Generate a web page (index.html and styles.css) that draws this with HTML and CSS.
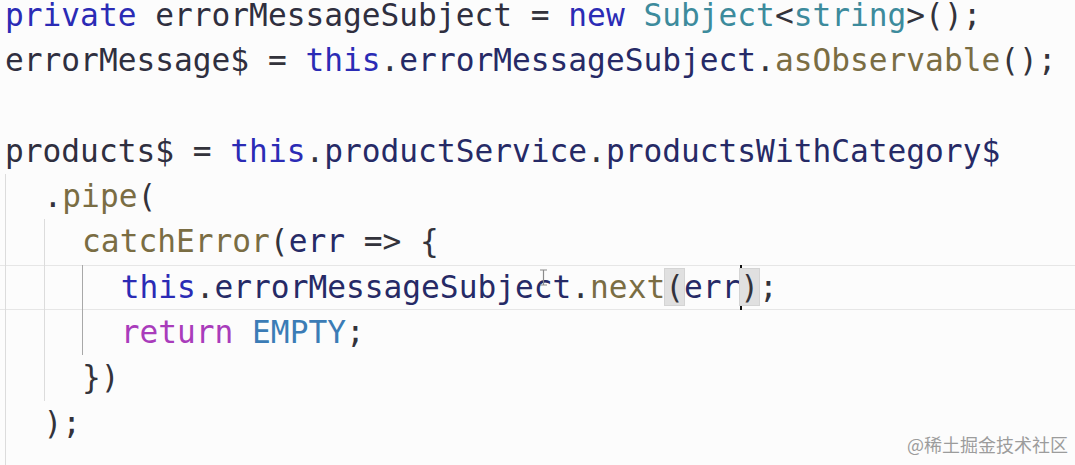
FILE: index.html
```html
<!DOCTYPE html>
<html lang="en">
<head>
  <meta charset="UTF-8" />
  <title>errorMessage$</title>
  <link rel="stylesheet" href="styles.css">
</head>
<body>
  <div class="editor">
    <div class="code">
      <div class="ln"><span class="tx"><span class="kw">private</span> <span class="id">errorMessageSubject</span> = <span class="kw">new</span> <span class="ty">Subject</span>&lt;<span class="ty">string</span>&gt;();</span></div>
      <div class="ln"><span class="tx"><span class="id">errorMessage$</span> = <span class="kw">this</span>.<span class="var">errorMessageSubject</span>.<span class="fn">asObservable</span>();</span></div>
      <div class="ln"></div>
      <div class="ln"><span class="tx"><span class="id">products$</span> = <span class="kw">this</span>.<span class="var">productService</span>.<span class="var">productsWithCategory$</span></span></div>
      <div class="ln">
        <span class="ind"></span>
        <span class="tx">.<span class="fn">pipe</span>(</span>
      </div>
      <div class="ln">
        <span class="ind"></span><span class="ind"></span>
        <span class="tx"><span class="fn">catchError</span>(<span class="var">err</span> =&gt; {</span>
      </div>
      <div class="ln cur">
        <span class="ind"></span><span class="ind"></span><span class="ind active"></span>
        <span class="tx"><span class="kw">this</span>.<span class="var">errorMessageSubject</span>.<span class="fn">next</span><span class="match">(</span><span class="var">err</span><span class="caret"></span><span class="match">)</span>;</span>
        <svg class="ibeam" width="9" height="17" viewBox="0 0 9 17"><path d="M1 1h7M4.5 1v15M1 16h7" stroke="#8a8a8a" stroke-width="1.2" fill="none"/></svg>
      </div>
      <div class="ln">
        <span class="ind"></span><span class="ind"></span><span class="ind active"></span>
        <span class="tx"><span class="ctl">return</span> <span class="const">EMPTY</span>;</span>
      </div>
      <div class="ln">
        <span class="ind"></span><span class="ind"></span>
        <span class="tx">})</span>
      </div>
      <div class="ln">
        <span class="ind"></span>
        <span class="tx">);</span>
      </div>
      <div class="ln">
        <span class="ind"></span>
      </div>
    </div>
    <div class="watermark">@稀土掘金技术社区</div>
  </div>
</body>
</html>
```

FILE: styles.css
```css
body {
  margin: 0;
  background: #fcfcfc;
}
.editor {
  position: relative;
  height: 465px;
  overflow: hidden;
}
.code {
  margin-top: -7px;
  font-family: "DejaVu Sans Mono", monospace;
  font-size: 31.2px;
  color: #33333b;
}
.ln {
  position: relative;
  display: flex;
  height: 45.3px;
  line-height: 45.3px;
  padding-left: 5px;
}
.ln.cur {
  box-shadow: inset 0 1px #e6e6e6, inset 0 -1px #e6e6e6;
}
.ind {
  width: 2ch;
  flex-shrink: 0;
  border-left: 1px solid #dcdcdc;
}
.ind.active {
  border-left-color: #a8a8a8;
}
.tx {
  white-space: pre;
}
.kw { color: #2b2bb5; }
.id { color: #2f2f3f; }
.var { color: #262a66; }
.ty { color: #3d8b9c; }
.fn { color: #7a6d43; }
.ctl { color: #a93cbb; }
.const { color: #3b7cb6; }
.match {
  background: #e0e0e0;
  box-shadow: 0 0 0 1px #d4d4d4;
}
.caret {
  display: inline-block;
  width: 0;
  height: 45px;
  vertical-align: top;
  border-left: 2px solid #111;
  margin-right: -2px;
}
.ibeam {
  position: absolute;
  left: 539px;
  top: 4px;
}
.watermark {
  position: absolute;
  right: 7px;
  bottom: 8px;
  font-family: "Noto Sans CJK SC", sans-serif;
  font-size: 18px;
  color: #9c9c9c;
}
```
